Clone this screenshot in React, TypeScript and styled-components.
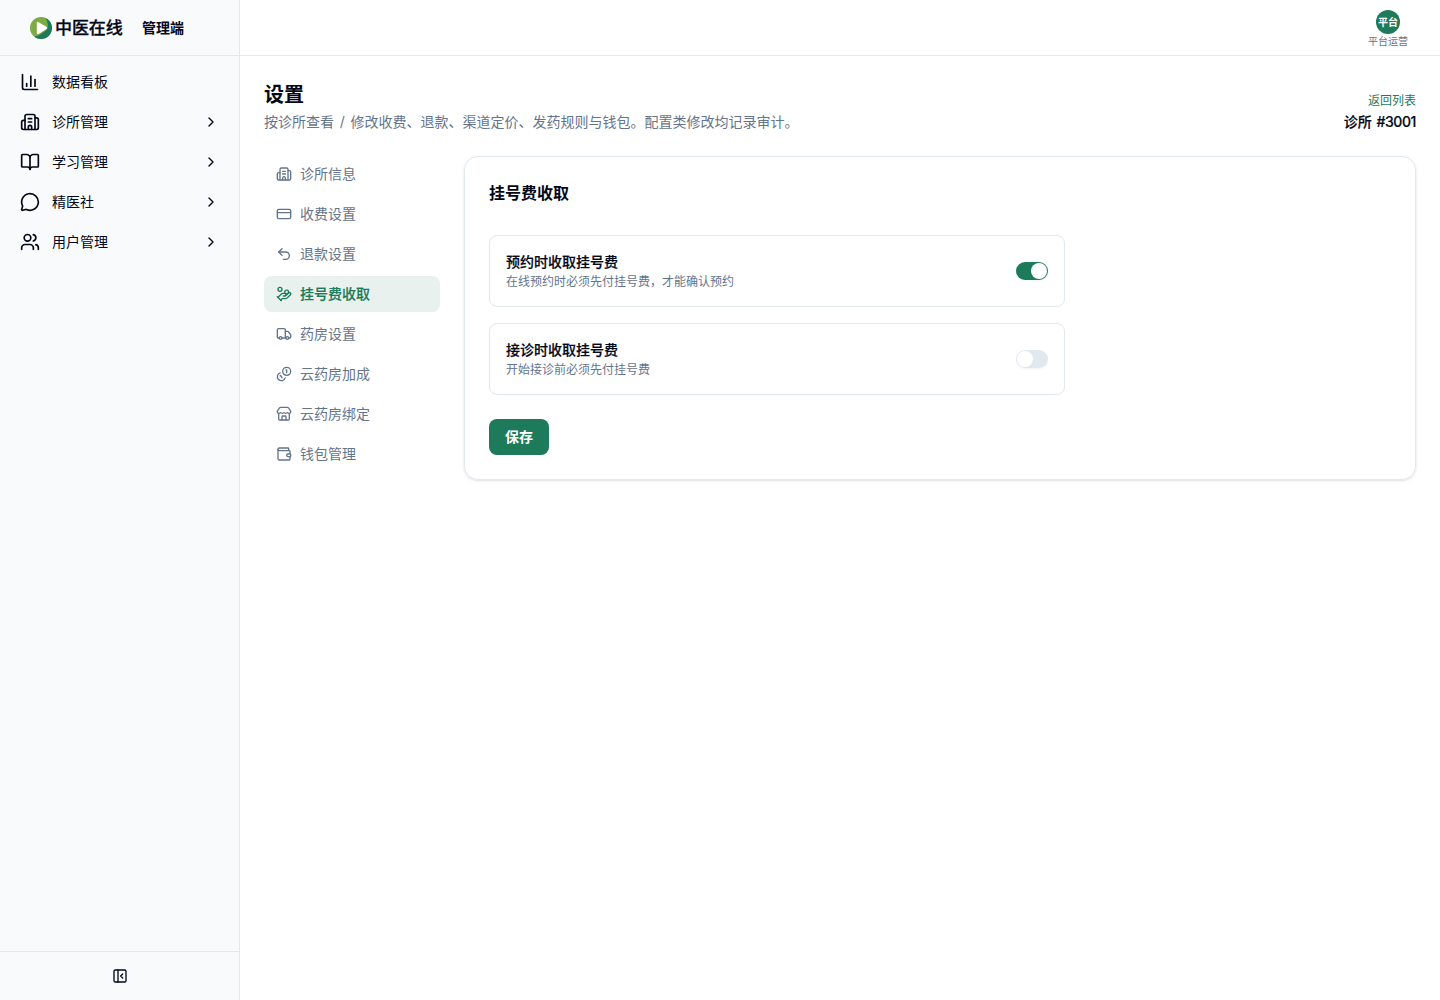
import React, { useState } from "react";
import styled, { createGlobalStyle } from "styled-components";
import {
  BookOpen,
  Building2,
  ChartColumn,
  ChevronRight,
  CreditCard,
  HandCoins,
  MessageCircle,
  PanelLeftClose,
  Store,
  Truck,
  Undo2,
  Users,
  Wallet,
} from "lucide-react";

type IconType = React.ComponentType<{ size?: number }>;

const color = {
  text: "#020817",
  muted: "#64748b",
  border: "#e2e8f0",
  primary: "#1d7a5a",
  accent: "#e8f1ee",
  sidebar: "#f8fafc",
};

const GlobalStyle = createGlobalStyle`
  *, *::before, *::after { box-sizing: border-box; }
  body {
    margin: 0;
    background: #fff;
    color: ${color.text};
    font-family: Inter, "Noto Sans CJK SC", sans-serif;
    font-size: 14px;
    line-height: 20px;
    -webkit-font-smoothing: antialiased;
  }
  h1, h2, p { margin: 0; }
  button { font: inherit; color: inherit; border: 0; background: none; padding: 0; cursor: pointer; }
`;

const Shell = styled.div`
  display: flex;
  height: 100vh;
`;

const Sidebar = styled.aside`
  display: flex;
  flex-direction: column;
  width: 240px;
  flex-shrink: 0;
  background: ${color.sidebar};
  border-right: 1px solid ${color.border};
`;

const Brand = styled.div`
  display: flex;
  align-items: center;
  height: 56px;
  padding-left: 29px;
  border-bottom: 1px solid ${color.border};
`;

const BrandName = styled.span`
  width: 68px;
  margin-left: 2px;
  font-size: 17px;
  font-weight: 500;
  line-height: 24px;
  letter-spacing: -0.1px;
  white-space: nowrap;
  -webkit-text-stroke: 0.3px ${color.text};
`;

const BrandRole = styled.span`
  margin-left: 19px;
  font-weight: 600;
`;

const MainNav = styled.nav`
  display: flex;
  flex: 1;
  flex-direction: column;
  gap: 4px;
  padding: 8px;
`;

const MainNavItem = styled.button`
  display: flex;
  align-items: center;
  gap: 12px;
  height: 36px;
  padding: 0 12px;
  text-align: left;
`;

const MainNavLabel = styled.span`
  flex: 1;
`;

const SidebarFooter = styled.div`
  display: flex;
  align-items: center;
  justify-content: center;
  height: 49px;
  border-top: 1px solid ${color.border};
`;

const IconButton = styled.button`
  display: flex;
`;

const Content = styled.div`
  display: flex;
  flex: 1;
  flex-direction: column;
  min-width: 0;
`;

const TopBar = styled.header`
  display: flex;
  align-items: center;
  justify-content: flex-end;
  height: 56px;
  padding: 0 32px;
  border-bottom: 1px solid ${color.border};
`;

const Account = styled.div`
  display: flex;
  flex-direction: column;
  align-items: center;
  gap: 2px;
  color: ${color.muted};
  font-size: 10px;
  line-height: 10px;
`;

const Avatar = styled.span`
  display: flex;
  align-items: center;
  justify-content: center;
  width: 24px;
  height: 24px;
  border-radius: 50%;
  background: ${color.primary};
  color: #fff;
  font-weight: 600;
`;

const Page = styled.main`
  display: flex;
  flex-direction: column;
  gap: 24px;
  padding: 24px;
`;

const PageHeader = styled.div`
  display: flex;
  align-items: flex-end;
  justify-content: space-between;
`;

const PageTitle = styled.h1`
  padding-top: 1px;
  font-size: 20px;
  font-weight: 600;
  line-height: 28px;
`;

const PageIntro = styled.p`
  margin-top: 3px;
  color: ${color.muted};
  word-spacing: 1.8px;
`;

const ClinicInfo = styled.div`
  display: flex;
  flex-direction: column;
  align-items: flex-end;
  gap: 3px;
`;

const BackLink = styled.a`
  color: ${color.primary};
  font-size: 12px;
  line-height: 16px;
`;

const ClinicName = styled.span`
  font-weight: 500;
  word-spacing: 1px;
  -webkit-text-stroke: 0.2px currentColor;
`;

const ClinicNumber = styled.span`
  letter-spacing: -0.4px;
`;

const Columns = styled.div`
  display: flex;
  align-items: flex-start;
  gap: 24px;
`;

const SettingsNav = styled.nav`
  display: flex;
  flex-direction: column;
  gap: 4px;
  width: 176px;
  flex-shrink: 0;
`;

const SettingsNavItem = styled.button<{ $active: boolean }>`
  display: flex;
  align-items: center;
  gap: 8px;
  height: 36px;
  padding: 0 12px;
  border-radius: 8px;
  background: ${(p) => (p.$active ? color.accent : "transparent")};
  color: ${(p) => (p.$active ? color.primary : color.muted)};
  font-weight: ${(p) => (p.$active ? 500 : 400)};
  -webkit-text-stroke: ${(p) => (p.$active ? "0.2px" : "0")} currentColor;
`;

const Card = styled.section`
  flex: 1;
  padding: 24px;
  border: 1px solid ${color.border};
  border-radius: 14px;
  box-shadow: 0 1px 3px rgba(0, 0, 0, 0.1), 0 1px 2px -1px rgba(0, 0, 0, 0.1);
`;

const CardTitle = styled.h2`
  font-size: 16px;
  font-weight: 600;
  line-height: 24px;
`;

const Options = styled.div`
  display: flex;
  flex-direction: column;
  gap: 16px;
  width: 576px;
  margin: 30px 0 24px;
`;

const Option = styled.div`
  display: flex;
  align-items: center;
  justify-content: space-between;
  height: 72px;
  padding: 0 16px;
  border: 1px solid ${color.border};
  border-radius: 8px;
`;

const OptionTitle = styled.p`
  font-weight: 500;
  -webkit-text-stroke: 0.2px currentColor;
`;

const OptionHint = styled.p`
  margin-top: 2px;
  color: ${color.muted};
  font-size: 12px;
  line-height: 16px;
`;

const Switch = styled.button<{ $on: boolean }>`
  display: flex;
  align-items: center;
  justify-content: ${(p) => (p.$on ? "flex-end" : "flex-start")};
  width: 32px;
  height: 18px;
  padding: 0 1px;
  border-radius: 9px;
  background: ${(p) => (p.$on ? color.primary : color.border)};
  box-shadow: 0 1px 2px rgba(0, 0, 0, 0.05);
`;

const Thumb = styled.span`
  width: 16px;
  height: 16px;
  border-radius: 50%;
  background: #fff;
`;

const SaveButton = styled.button`
  display: flex;
  align-items: center;
  height: 36px;
  padding: 0 16px;
  border-radius: 8px;
  background: ${color.primary};
  color: #fff;
  font-weight: 600;
`;

function Logo() {
  return (
    <svg width="24" height="24" viewBox="0 0 24 24">
      <circle cx="12" cy="12" r="11" fill="#7fab47" />
      <path d="M16.5 2A11 11 0 1 1 5.2 20.7C10 19.5 17 16 18.5 11.5C19.2 8 18 4 16.5 2Z" fill="#1d7a5a" />
      <path d="M7.8 7.2Q7.8 5.2 9.6 6.2L17.7 10.9Q19 11.9 17.7 12.9L9.6 18Q7.8 19 7.8 17Z" fill="#fff" />
    </svg>
  );
}

function Coins({ size = 24 }: { size?: number }) {
  return (
    <svg
      width={size}
      height={size}
      viewBox="0 0 24 24"
      fill="none"
      stroke="currentColor"
      strokeWidth="2"
      strokeLinecap="round"
      strokeLinejoin="round"
    >
      <path d="M13.744 17.736a6 6 0 1 1-7.48-7.48" />
      <path d="M15 6h1v4" />
      <path d="m6.134 14.768.866-.5 2 3.464" />
      <circle cx="16" cy="8" r="6" />
    </svg>
  );
}

const mainItems: { label: string; icon: IconType; nested: boolean }[] = [
  { label: "数据看板", icon: ChartColumn, nested: false },
  { label: "诊所管理", icon: Building2, nested: true },
  { label: "学习管理", icon: BookOpen, nested: true },
  { label: "精医社", icon: MessageCircle, nested: true },
  { label: "用户管理", icon: Users, nested: true },
];

const settingItems: { label: string; icon: IconType }[] = [
  { label: "诊所信息", icon: Building2 },
  { label: "收费设置", icon: CreditCard },
  { label: "退款设置", icon: Undo2 },
  { label: "挂号费收取", icon: HandCoins },
  { label: "药房设置", icon: Truck },
  { label: "云药房加成", icon: Coins },
  { label: "云药房绑定", icon: Store },
  { label: "钱包管理", icon: Wallet },
];

const options = [
  { title: "预约时收取挂号费", hint: "在线预约时必须先付挂号费，才能确认预约" },
  { title: "接诊时收取挂号费", hint: "开始接诊前必须先付挂号费" },
];

export default function App() {
  const [active, setActive] = useState("挂号费收取");
  const [enabled, setEnabled] = useState([true, false]);
  const toggle = (index: number) =>
    setEnabled((values) => values.map((value, i) => (i === index ? !value : value)));

  return (
    <>
      <GlobalStyle />
      <Shell>
        <Sidebar>
          <Brand>
            <Logo />
            <BrandName>中医在线</BrandName>
            <BrandRole>管理端</BrandRole>
          </Brand>
          <MainNav>
            {mainItems.map(({ label, icon: Icon, nested }) => (
              <MainNavItem key={label}>
                <Icon size={20} />
                <MainNavLabel>{label}</MainNavLabel>
                {nested && <ChevronRight size={16} />}
              </MainNavItem>
            ))}
          </MainNav>
          <SidebarFooter>
            <IconButton>
              <PanelLeftClose size={16} />
            </IconButton>
          </SidebarFooter>
        </Sidebar>
        <Content>
          <TopBar>
            <Account>
              <Avatar>平台</Avatar>
              平台运营
            </Account>
          </TopBar>
          <Page>
            <PageHeader>
              <div>
                <PageTitle>设置</PageTitle>
                <PageIntro>按诊所查看 / 修改收费、退款、渠道定价、发药规则与钱包。配置类修改均记录审计。</PageIntro>
              </div>
              <ClinicInfo>
                <BackLink>返回列表</BackLink>
                <ClinicName>
                  诊所 <ClinicNumber>#3001</ClinicNumber>
                </ClinicName>
              </ClinicInfo>
            </PageHeader>
            <Columns>
              <SettingsNav>
                {settingItems.map(({ label, icon: Icon }) => (
                  <SettingsNavItem key={label} $active={label === active} onClick={() => setActive(label)}>
                    <Icon size={16} />
                    {label}
                  </SettingsNavItem>
                ))}
              </SettingsNav>
              <Card>
                <CardTitle>挂号费收取</CardTitle>
                <Options>
                  {options.map(({ title, hint }, index) => (
                    <Option key={title}>
                      <div>
                        <OptionTitle>{title}</OptionTitle>
                        <OptionHint>{hint}</OptionHint>
                      </div>
                      <Switch $on={enabled[index]} onClick={() => toggle(index)}>
                        <Thumb />
                      </Switch>
                    </Option>
                  ))}
                </Options>
                <SaveButton>保存</SaveButton>
              </Card>
            </Columns>
          </Page>
        </Content>
      </Shell>
    </>
  );
}
